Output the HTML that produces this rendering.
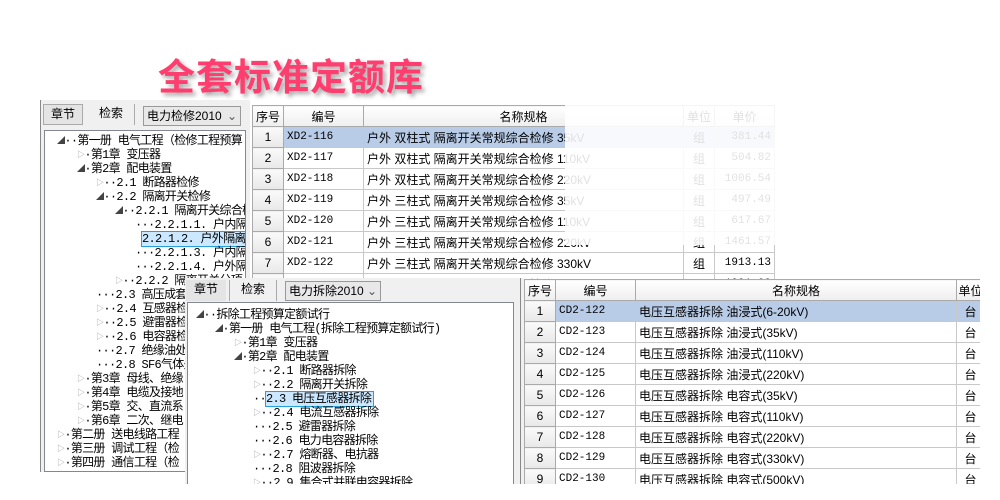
<!DOCTYPE html>
<html><head><meta charset="utf-8"><style>
*{margin:0;padding:0;box-sizing:border-box}
body{width:1000px;height:500px;background:#fff;position:relative;overflow:hidden;font-family:"Liberation Sans","Noto Sans CJK SC",sans-serif;font-size:12px;color:#000}
.a{position:absolute;white-space:nowrap}
.panel{background:#f0f0f0}
.tab{position:absolute;height:21px;border:1px solid #aaa;background:#f0f0f0;text-align:center;line-height:19px;font-size:12px}
.sel{position:absolute;height:20px;border:1px solid #999;background:#e8e8e8;line-height:18px;padding-left:3px;font-size:12px}
.tree{position:absolute;background:#fff;border:1px solid #828790;overflow:hidden}
.t{position:absolute;white-space:nowrap;line-height:14px;font-size:12px;font-family:"Liberation Mono","Noto Sans CJK SC",monospace;letter-spacing:-0.7px}
.t i{font-style:normal;font-size:8px;color:#444;vertical-align:1px}
.t b{font-weight:normal;font-size:8px;color:#999;vertical-align:1px}
.hl{background:#cce8ff;outline:1px solid #26a0da}
table{position:absolute;border-collapse:collapse;table-layout:fixed;font-size:12px;background:#fff}
td,th{border:1px solid #c8c8c8;height:21px;padding:0 3px;white-space:nowrap;overflow:hidden;font-weight:normal}
th{background:linear-gradient(#fff,#eee);border-color:#aaa}
td.n{background:linear-gradient(#fafafa,#e8e8e8);text-align:center;border-color:#aaa}
td.m{font-family:"Liberation Mono","Noto Sans CJK SC",monospace;font-size:11px}
tr.s td:not(.n){background:#b8cce8}
td.c{text-align:center}td.r{text-align:right;font-family:"Liberation Mono",monospace;font-size:11px}
</style></head><body>

<div class="a" style="left:158px;top:47px;font-size:37px;font-weight:bold;color:#ff3d6e;letter-spacing:1px;text-shadow:3px 3px 4px rgba(0,0,0,.35);font-family:'Noto Sans CJK SC',sans-serif">全套标准定额库</div>

<div class="a panel" style="left:40px;top:100px;width:210px;height:372px;border-left:1px solid #888"></div>
<div class="tab" style="left:43px;top:104px;width:40px;background:#e4e4e4">章节</div>
<div class="tab" style="left:88px;top:104px;width:47px;border:none;border-right:1px solid #aaa">检索</div>
<div class="sel" style="left:143px;top:106px;width:98px">电力检修2010 <span style="float:right;padding-right:3px;color:#555">⌄</span></div>
<div class="tree" style="left:44px;top:130px;width:202px;height:342px">
<div class="t" style="left:12px;top:3px"><i>◢</i>··第一册 电气工程（检修工程预算</div>
<div class="t" style="left:32px;top:17px"><b>▷</b>·第1章 变压器</div>
<div class="t" style="left:32px;top:31px"><i>◢</i>·第2章 配电装置</div>
<div class="t" style="left:51px;top:45px"><b>▷</b>··2.1 断路器检修</div>
<div class="t" style="left:51px;top:59px"><i>◢</i>··2.2 隔离开关检修</div>
<div class="t" style="left:70px;top:73px"><i>◢</i>··2.2.1 隔离开关综合检</div>
<div class="t" style="left:90px;top:87px">···2.2.1.1. 户内隔离</div>
<div class="t" style="left:97px;top:101px"><span class="hl" style="padding-right:3px">2.2.1.2. 户外隔离</span></div>
<div class="t" style="left:90px;top:115px">···2.2.1.3. 户内隔离</div>
<div class="t" style="left:90px;top:129px">···2.2.1.4. 户外隔离</div>
<div class="t" style="left:70px;top:143px"><b>▷</b>··2.2.2 隔离开关分项</div>
<div class="t" style="left:51px;top:157px">···2.3 高压成套配</div>
<div class="t" style="left:51px;top:171px"><b>▷</b>··2.4 互感器检修</div>
<div class="t" style="left:51px;top:185px"><b>▷</b>··2.5 避雷器检修</div>
<div class="t" style="left:51px;top:199px"><b>▷</b>··2.6 电容器检修</div>
<div class="t" style="left:51px;top:213px">···2.7 绝缘油处理</div>
<div class="t" style="left:51px;top:227px">···2.8 SF6气体处</div>
<div class="t" style="left:32px;top:241px"><b>▷</b>·第3章 母线、绝缘</div>
<div class="t" style="left:32px;top:255px"><b>▷</b>·第4章 电缆及接地</div>
<div class="t" style="left:32px;top:269px"><b>▷</b>·第5章 交、直流系</div>
<div class="t" style="left:32px;top:283px"><b>▷</b>·第6章 二次、继电</div>
<div class="t" style="left:12px;top:297px"><b>▷</b>·第二册 送电线路工程</div>
<div class="t" style="left:12px;top:311px"><b>▷</b>·第三册 调试工程（检</div>
<div class="t" style="left:12px;top:325px"><b>▷</b>·第四册 通信工程（检</div>
</div>

<table style="left:252px;top:105px;width:522px">
<colgroup><col style="width:31px"><col style="width:80px"><col style="width:200px"><col style="width:120px"><col style="width:31px"><col style="width:60px"></colgroup>
<tr><th>序号</th><th>编号</th><th colspan="2">名称规格</th><th>单位</th><th>单价</th></tr>
<tr class="s"><td class="n">1</td><td class="m">XD2-116</td><td colspan="2">户外 双柱式 隔离开关常规综合检修 35kV</td><td class="c">组</td><td class="r">381.44</td></tr>
<tr><td class="n">2</td><td class="m">XD2-117</td><td colspan="2">户外 双柱式 隔离开关常规综合检修 110kV</td><td class="c">组</td><td class="r">504.82</td></tr>
<tr><td class="n">3</td><td class="m">XD2-118</td><td colspan="2">户外 双柱式 隔离开关常规综合检修 220kV</td><td class="c">组</td><td class="r">1006.54</td></tr>
<tr><td class="n">4</td><td class="m">XD2-119</td><td colspan="2">户外 三柱式 隔离开关常规综合检修 35kV</td><td class="c">组</td><td class="r">497.49</td></tr>
<tr><td class="n">5</td><td class="m">XD2-120</td><td colspan="2">户外 三柱式 隔离开关常规综合检修 110kV</td><td class="c">组</td><td class="r">617.67</td></tr>
<tr><td class="n">6</td><td class="m">XD2-121</td><td colspan="2">户外 三柱式 隔离开关常规综合检修 220kV</td><td class="c">组</td><td class="r">1461.57</td></tr>
<tr><td class="n">7</td><td class="m">XD2-122</td><td colspan="2">户外 三柱式 隔离开关常规综合检修 330kV</td><td class="c">组</td><td class="r">1913.13</td></tr>
<tr><td class="n">8</td><td class="m">XD2-123</td><td colspan="2">户外 三柱式 隔离开关常规综合检修 500kV</td><td class="c">组</td><td class="r">1991.00</td></tr>
</table>
<div class="a" style="left:565px;top:42px;width:412px;height:203px;background:rgba(255,255,255,.88)"></div>

<div class="a panel" style="left:185px;top:278px;width:339px;height:206px"></div>
<div class="tab" style="left:186px;top:280px;width:40px;background:#e4e4e4;border:none">章节</div>
<div class="tab" style="left:229px;top:280px;width:48px;border:none;border-left:1px solid #aaa;border-right:1px solid #aaa">检索</div>
<div class="sel" style="left:285px;top:281px;width:96px">电力拆除2010 <span style="float:right;padding-right:3px;color:#555">⌄</span></div>
<div class="tree" style="left:187px;top:302px;width:327px;height:182px;border-bottom:none">
<div class="t" style="left:8px;top:5px"><i>◢</i>··拆除工程预算定额试行</div>
<div class="t" style="left:27px;top:19px"><i>◢</i>·第一册 电气工程(拆除工程预算定额试行)</div>
<div class="t" style="left:46px;top:33px"><b>▷</b>·第1章 变压器</div>
<div class="t" style="left:46px;top:47px"><i>◢</i>·第2章 配电装置</div>
<div class="t" style="left:65px;top:61px"><b>▷</b>··2.1 断路器拆除</div>
<div class="t" style="left:65px;top:75px"><b>▷</b>··2.2 隔离开关拆除</div>
<div class="t" style="left:65px;top:89px">··<span class="hl" style="padding-right:2px">2.3 电压互感器拆除</span></div>
<div class="t" style="left:65px;top:103px"><b>▷</b>··2.4 电流互感器拆除</div>
<div class="t" style="left:65px;top:117px">···2.5 避雷器拆除</div>
<div class="t" style="left:65px;top:131px">···2.6 电力电容器拆除</div>
<div class="t" style="left:65px;top:145px"><b>▷</b>··2.7 熔断器、电抗器</div>
<div class="t" style="left:65px;top:159px">···2.8 阻波器拆除</div>
<div class="t" style="left:65px;top:173px"><b>▷</b>··2.9 集合式并联电容器拆除</div>
</div>
<div class="a" style="left:520px;top:278px;width:2px;height:206px;border-left:1px solid #888"></div>

<table style="left:524px;top:279px;width:460px">
<colgroup><col style="width:31px"><col style="width:80px"><col style="width:321px"><col style="width:28px"></colgroup>
<tr><th>序号</th><th>编号</th><th>名称规格</th><th style="padding:0">单位</th></tr>
<tr class="s"><td class="n">1</td><td class="m">CD2-122</td><td>电压互感器拆除 油浸式(6-20kV)</td><td class="c">台</td></tr>
<tr><td class="n">2</td><td class="m">CD2-123</td><td>电压互感器拆除 油浸式(35kV)</td><td class="c">台</td></tr>
<tr><td class="n">3</td><td class="m">CD2-124</td><td>电压互感器拆除 油浸式(110kV)</td><td class="c">台</td></tr>
<tr><td class="n">4</td><td class="m">CD2-125</td><td>电压互感器拆除 油浸式(220kV)</td><td class="c">台</td></tr>
<tr><td class="n">5</td><td class="m">CD2-126</td><td>电压互感器拆除 电容式(35kV)</td><td class="c">台</td></tr>
<tr><td class="n">6</td><td class="m">CD2-127</td><td>电压互感器拆除 电容式(110kV)</td><td class="c">台</td></tr>
<tr><td class="n">7</td><td class="m">CD2-128</td><td>电压互感器拆除 电容式(220kV)</td><td class="c">台</td></tr>
<tr><td class="n">8</td><td class="m">CD2-129</td><td>电压互感器拆除 电容式(330kV)</td><td class="c">台</td></tr>
<tr><td class="n">9</td><td class="m">CD2-130</td><td>电压互感器拆除 电容式(500kV)</td><td class="c">台</td></tr>
</table>
<div class="a" style="left:0;top:484px;width:1000px;height:16px;background:#fff"></div>
<div class="a" style="left:980px;top:270px;width:20px;height:230px;background:#fff"></div>
</body></html>
